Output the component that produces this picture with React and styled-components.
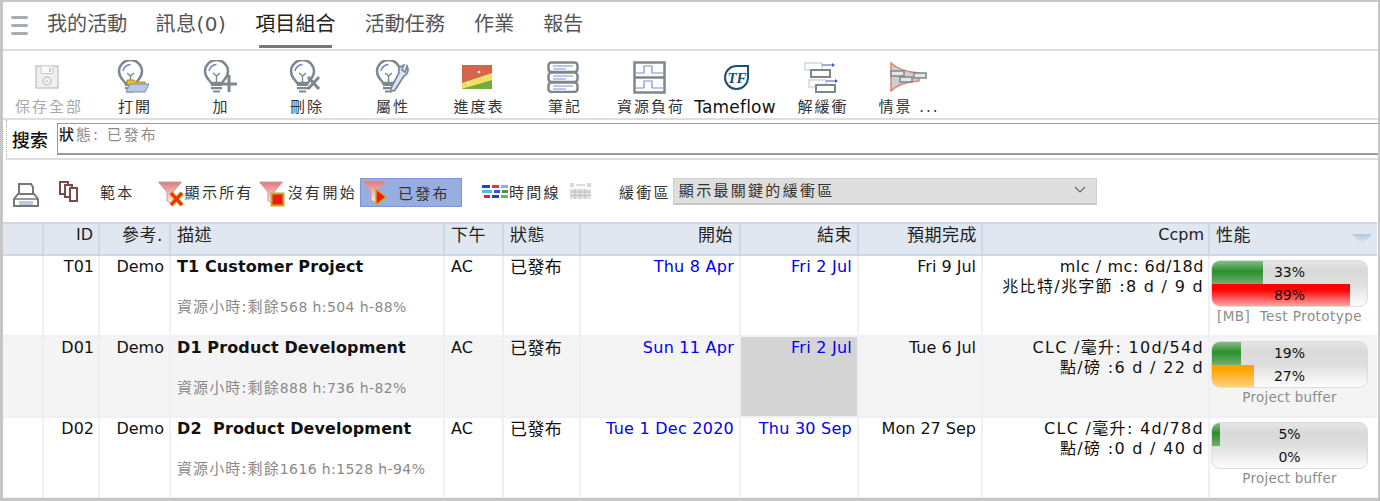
import React from "react";
import styled, { createGlobalStyle } from "styled-components";

const fontStack = `"DejaVu Sans", "Noto Sans CJK TC", sans-serif`;

const GlobalStyle = createGlobalStyle`
  html, body {
    margin: 0;
    padding: 0;
    background: #fff;
  }
`;

const Page = styled.div`
  box-sizing: border-box;
  width: 1380px;
  height: 501px;
  overflow: hidden;
  border: solid #c6c6c6;
  border-width: 2px 2px 3px 3px;
  font-family: ${fontStack};
  color: #111;
  background: #fff;
`;

const Nav = styled.nav`
  display: flex;
  align-items: stretch;
  height: 47px;
  padding-left: 8px;
  border-bottom: 2px solid #dedede;
`;

const Burger = styled.div`
  display: flex;
  flex-direction: column;
  gap: 5px;
  width: 17px;
  margin: 14px 19px 0 0;

  span {
    height: 3px;
    border-radius: 2px;
    background: #a9aeb3;
  }
`;

const NavItem = styled.div`
  position: relative;
  margin-right: ${p => (p.$tight ? 28 : 29)}px;
  padding-top: 7px;
  font-size: 20px;
  line-height: 30px;
  letter-spacing: ${p => (p.$wide ? "0.5px" : "0.1px")};
  color: ${p => (p.$active ? "#222" : "#555")};

  &::after {
    content: "";
    display: ${p => (p.$active ? "block" : "none")};
    position: absolute;
    left: 4px;
    right: 4px;
    bottom: 1px;
    height: 3px;
    background: #777;
  }
`;

const Toolbar = styled.div`
  display: flex;
  height: 67px;
  padding-left: 3px;
  border-bottom: 2px solid #dedede;
`;

const ToolButton = styled.div`
  display: flex;
  flex-direction: column;
  align-items: center;
  width: 86px;
  flex: none;
  color: ${p => (p.$disabled ? "#a8a8a8" : "#333")};
`;

const ToolIcon = styled.div`
  box-sizing: border-box;
  display: flex;
  align-items: center;
  justify-content: center;
  height: 45px;
  padding-top: 7px;
  margin-right: ${p => (p.$nudge ? 4 : 0)}px;
`;

const ToolLabel = styled.div`
  font-size: ${p => (p.$latin ? "17px" : "15px")};
  line-height: 22px;
  letter-spacing: ${p => (p.$latin ? "0.2px" : "2px")};
  margin-right: ${p => (p.$latin ? 4 : 0)}px;
  white-space: nowrap;
  color: ${p => (p.$latin ? "#111" : "inherit")};
`;

const SearchRow = styled.div`
  display: flex;
  align-items: center;
  height: 38px;
  margin-left: 3px;
  border-left: 1px dotted #aaa;
  border-bottom: 2px solid #dedede;
`;

const SearchLabel = styled.div`
  width: 45px;
  padding-left: 5px;
  font-size: 18px;
  font-weight: 500;
  color: #111;
`;

const SearchBox = styled.div`
  flex: 1;
  box-sizing: border-box;
  height: 32px;
  padding: 0 0 0 1px;
  border: solid #9a9a9a;
  border-width: 1px 0 2px 1px;
  font-size: 15px;
  line-height: 22px;
  letter-spacing: 2px;
  color: #8b8b8b;

  b {
    font-weight: 500;
    color: #222;
  }
`;

const FilterBar = styled.div`
  display: flex;
  align-items: center;
  height: 62px;
  padding-left: 10px;
  color: #333;
  font-size: 15px;
  letter-spacing: 2.3px;
  white-space: nowrap;
`;

const BarIcon = styled.div`
  display: flex;
  flex: none;
  margin-left: ${p => p.$gap || 0}px;
  margin-top: ${p => p.$drop || 0}px;
`;

const BarText = styled.span`
  margin-left: ${p => p.$gap || 0}px;
`;

const FilterToggle = styled.div`
  display: flex;
  align-items: center;
  box-sizing: border-box;
  width: 102px;
  height: 29px;
  margin: 3px 0 0 3px;
  padding-left: 1px;
  background: #98aee0;
  border: 1px solid #7b97d8;
`;

const BufferSelect = styled.div`
  display: flex;
  align-items: center;
  justify-content: space-between;
  box-sizing: border-box;
  width: 424px;
  height: 27px;
  margin-left: 2px;
  padding: 0 10px 2px 5px;
  background: #dedede;
  border: 1px solid #cfcfcf;
  border-bottom: 2px solid #c6c6c6;
`;

const Table = styled.table`
  table-layout: fixed;
  border-collapse: collapse;
  width: 1374px;
  font-size: 16px;
  line-height: 20px;
`;

const Head = styled.th`
  box-sizing: border-box;
  height: 32px;
  padding: 0 ${p => p.$padRight || 6}px 8px 6px;
  background: #e0e7f0;
  border: 2px solid #cbd8e8;
  font-size: ${p => (p.$cjk ? "17px" : "16px")};
  font-weight: 400;
  text-align: ${p => p.$align || "left"};
  letter-spacing: ${p => (p.$cjk ? "0.5px" : "0")};
  position: relative;
  color: #222;

  &:first-child {
    border-left: none;
  }
  &:last-child {
    border-right: none;
  }
`;

const SortMark = styled.i`
  position: absolute;
  right: 5px;
  top: 10px;
  width: 20px;
  height: 11px;
  clip-path: polygon(0 0, 100% 0, 50% 100%);
  background: linear-gradient(#b5c6dc, #e8edf5);
`;

const Row = styled.tr`
  background: ${p => (p.$alt ? "#f4f4f5" : "#fff")};
`;

const Cell = styled.td`
  box-sizing: border-box;
  height: 81px;
  padding: 1px ${p => p.$padRight || 6}px 0 6px;
  vertical-align: top;
  border: 2px solid #eef0f6;
  text-align: ${p => p.$align || "left"};
  color: ${p => (p.$blue ? "#0000ee" : "#111")};
  letter-spacing: ${p => (p.$blue ? "0.25px" : "0")};
  background: ${p => (p.$late ? "#d4d4d4" : "transparent")};
  white-space: nowrap;

  &:first-child {
    border-left: none;
  }
  &:last-child {
    border-right: none;
    padding: 4px 0 0 1px;
  }
`;

const Status = styled.span`
  font-size: 17px;
  letter-spacing: 0.4px;
`;

const Title = styled.div`
  font-weight: 700;
  letter-spacing: 0.12px;
  white-space: pre;
`;

const Hours = styled.div`
  margin-top: 20px;
  font-size: 14px;
  color: #8a8a8a;
  letter-spacing: 0.4px;

  span {
    font-size: 15px;
    letter-spacing: 1.1px;
  }
`;

const CcpmLine = styled.div`
  letter-spacing: ${p => (p.$latin ? "0.55px" : "1.3px")};
`;

const Gauge = styled.div`
  box-sizing: border-box;
  display: flex;
  flex-direction: column;
  width: 157px;
  height: 47px;
  overflow: hidden;
  border: 1px solid #dcdcdc;
  border-radius: 9px;
  background: linear-gradient(#e6e6e6 0, #d9d9d9 22%, #dedede 50%, #fdfdfd 100%);
`;

const GaugeRow = styled.div`
  display: grid;
  flex: 1;
`;

const GaugeFill = styled.div`
  grid-area: 1 / 1;
  height: 100%;
  background: ${p =>
    p.$tone === "red"
      ? "linear-gradient(#ff0000 25%, #ffb0b0)"
      : p.$tone === "orange"
      ? "linear-gradient(#ffa500 20%, #ffd488)"
      : "linear-gradient(#85bd85, #2b8f2b 45%, #6fb06f)"};
`;

const GaugeText = styled.div`
  grid-area: 1 / 1;
  z-index: 1;
  font-size: 14px;
  line-height: 23px;
  text-align: center;
  color: #111;
`;

const GaugeCaption = styled.div`
  width: 157px;
  font-size: 13.5px;
  line-height: 19px;
  text-align: center;
  color: #8c8c8c;
  letter-spacing: ${p => (p.$long ? "0.45px" : "0.25px")};
  white-space: pre;
`;

const Bulb = ({ children }) => (
  <svg width="36" height="34" viewBox="0 0 36 34">
    <path d="M8 23c-1-3-6-5-6-11.500a11.500 11.500 0 0 1 23 0c0 6.500-5 8.500-6 11.500z" fill="#fff" stroke="#7f888e" strokeWidth="2.500" />
    <path d="M6 11a7.500 7.500 0 0 1 7.500-6.500" fill="none" stroke="#6f84c9" strokeWidth="1.500" />
    <path d="M10 13l3.500 3 3.500-3M13.500 16v7" fill="none" stroke="#7f888e" strokeWidth="1.400" />
    <path d="M8 25h11M8 28.200h11M10 31.500h7" stroke="#7f888e" strokeWidth="2.200" />
    {children}
  </svg>
);

const icons = {
  save: (
    <svg width="24" height="24" viewBox="0 0 24 24">
      <path d="M1 1h22v22H1z" fill="#f0f0f0" stroke="#c9c9c9" strokeWidth="1.500" />
      <path d="M6 1.500v7h12v-7" fill="#fafafa" stroke="#c9c9c9" />
      <path d="M14 3h2v4h-2z" fill="#c9c9c9" />
      <circle cx="12" cy="16" r="4" fill="none" stroke="#c9c9c9" strokeWidth="1.500" />
      <circle cx="12" cy="16" r="1" fill="#c9c9c9" />
    </svg>
  ),
  open: (
    <Bulb>
      <path d="M10 20h7l2 2h9v3H10z" fill="#f0bd2e" stroke="#a98a2b" />
      <path d="M9 32l4-8h19l-4 8z" fill="#b9c8e6" stroke="#7e8fa8" />
    </Bulb>
  ),
  add: (
    <Bulb>
      <path d="M26 15v17M17 24h17" stroke="#7f888e" strokeWidth="3" />
    </Bulb>
  ),
  remove: (
    <Bulb>
      <path d="M19 17l11 12M30 17L19 29" stroke="#7f888e" strokeWidth="3" />
    </Bulb>
  ),
  props: (
    <Bulb>
      <path d="M32 6c2 4 1 8-3 10l-9 14c-1 2-5 0-4-2l8-15c-1-4 1-7 5-8l-2 5 3 2z" fill="#dfe5f2" stroke="#7d8aa5" strokeWidth="1.800" />
    </Bulb>
  ),
  gantt: (
    <svg width="32" height="26" viewBox="0 0 32 26">
      <path d="M1 1h30v24H1z" fill="#d2654a" />
      <path d="M1 19L31 9v8L1 25z" fill="#f4dd63" />
      <path d="M1 25l30-9v9z" fill="#6fae3d" />
      <circle cx="18" cy="8" r="1.300" fill="#fff" />
      <circle cx="7" cy="19" r="1.300" fill="#fff" />
    </svg>
  ),
  notes: (
    <svg width="32" height="32" viewBox="0 0 32 32">
      {[1, 11, 21].map(y => (
        <g key={y}>
          <rect x="1.500" y={y + 0.5} width="29" height="9.500" rx="3" fill="#fff" stroke="#7f868c" strokeWidth="2.500" />
          <path d={`M6 ${y + 4}h20M6 ${y + 7}h13`} stroke="#7c90cf" strokeWidth="1.200" />
        </g>
      ))}
    </svg>
  ),
  load: (
    <svg width="33" height="33" viewBox="0 0 33 33">
      <path d="M1.500 1.500h30v30h-30zM1.500 16.500h30" fill="#fff" stroke="#7f868c" strokeWidth="2.500" />
      <path d="M3 12h8V5h8v7h11M3 27h8v-7h8v7h11" fill="none" stroke="#7c90cf" strokeWidth="1.200" />
    </svg>
  ),
  tameflow: (
    <svg width="28" height="27" viewBox="0 0 28 27">
      <path d="M25 2v12a11.500 11.500 0 1 1-11-12z" fill="#fff" stroke="#1c4f77" strokeWidth="2" />
      <text x="14" y="19" textAnchor="middle" fontSize="15" fontWeight="700" fontStyle="italic" fill="#1c4f77" fontFamily="Liberation Serif, serif">TF</text>
    </svg>
  ),
  unbuffer: (
    <svg width="34" height="32" viewBox="0 0 34 32">
      <rect x="1" y="2" width="17" height="7" fill="#fff" stroke="#d5d5d5" strokeWidth="1.500" />
      <rect x="7" y="9" width="19" height="7" fill="#fff" stroke="#7f868c" strokeWidth="2" />
      <path d="M18 4h11" stroke="#3f5fb0" />
      <path d="M28 2l3 2-3 2z" fill="#3f5fb0" />
      <rect x="5" y="19" width="17" height="7" fill="#fff" stroke="#d5d5d5" strokeWidth="1.500" />
      <rect x="12" y="24" width="19" height="7" fill="#fff" stroke="#7f868c" strokeWidth="2" />
      <path d="M22 20h11" stroke="#3f5fb0" />
      <path d="M31 18l3 2-3 2z" fill="#3f5fb0" />
    </svg>
  ),
  scenario: (
    <svg width="38" height="30" viewBox="0 0 38 30">
      <path d="M1 1c6 6 14 9 28 10v8C15 20 7 23 1 29z" fill="#cfcfcf" stroke="#d98672" strokeWidth="1.500" />
      <rect x="1" y="9" width="13" height="5" fill="#e6e6e6" stroke="#7f868c" strokeWidth="1.500" />
      <rect x="10" y="15" width="12" height="5" fill="#e6e6e6" stroke="#7f868c" strokeWidth="1.500" />
      <rect x="24" y="11" width="12" height="5" fill="#e6e6e6" stroke="#7f868c" strokeWidth="1.500" />
    </svg>
  ),
  printer: (
    <svg width="26" height="25" viewBox="0 0 26 25">
      <path d="M6 13V2h12l2 3v8" fill="#fff" stroke="#777" strokeWidth="2" />
      <path d="M5 12h16l4 5v7H1v-7z" fill="#fff" stroke="#777" strokeWidth="2" />
      <path d="M1 17h24" stroke="#777" strokeWidth="1.500" />
      <path d="M6 20h14M6 22h14" stroke="#7c90cf" />
    </svg>
  ),
  copy: (
    <svg width="21" height="22" viewBox="0 0 21 22">
      <path d="M2 2h8v12H2z" fill="#fff" stroke="#7a4a44" strokeWidth="2" />
      <path d="M7 5h7v12H7z" fill="#fff" stroke="#7a4a44" strokeWidth="2" />
      <path d="M12 8h7v13h-7z" fill="#fff" stroke="#7a4a44" strokeWidth="2" />
    </svg>
  ),
  timeline: (
    <svg width="27" height="15" viewBox="0 0 27 15">
      <path d="M1 1h8v3H1z" fill="#2b3fc0" />
      <path d="M11 1h7v3h-7z" fill="#e33b3b" />
      <path d="M20 1h7v3h-7z" fill="#9aa7e0" />
      <path d="M1 6h10v3H1z" fill="#57b7e8" />
      <path d="M13 6h6v3h-6z" fill="#3b55c8" />
      <path d="M21 6h6v3h-6z" fill="#3c9b4a" />
      <path d="M3 11h6v3H3z" fill="#ee2222" />
      <path d="M11 11h7v3h-7z" fill="#2b3fc0" />
      <path d="M20 11h7v3h-7z" fill="#63b85a" />
    </svg>
  ),
  calendar: (
    <svg width="23" height="18" viewBox="0 0 23 18">
      <path d="M1 1h4v4H1zM18 1h4v4h-4z" fill="#d8d8d8" />
      <path d="M7 3h9" stroke="#d0d0d0" strokeWidth="1.500" />
      <path d="M1 7h21v10H1z" fill="#e2e2e2" />
      <path d="M1 10h21M1 13.500h21M6 7v10M11 7v10M16 7v10" stroke="#bfbfbf" />
    </svg>
  )
};

const Funnel = ({ mark }) => (
  <svg width="26" height="27" viewBox="0 0 26 27">
    <defs>
      <linearGradient id={`funnel-${mark}`} x1="0" x2="0" y1="0" y2="1">
        <stop offset="0" stopColor="#dd7a7a" />
        <stop offset="0.5" stopColor="#f2b5b5" />
        <stop offset="1" stopColor="#fff1f1" />
      </linearGradient>
    </defs>
    <path d="M0.500 2h23l-8.500 10v12l-6-3v-9z" fill={`url(#funnel-${mark})`} stroke="#cf9a9a" />
    {mark === "all" && <path d="M13 13l11 12M24 13L13 25" stroke="#d8c24a" strokeWidth="5" />}
    {mark === "all" && <path d="M13 13l11 12M24 13L13 25" stroke="#e8300c" strokeWidth="3" />}
    {mark === "idle" && <path d="M12.500 13.500h12v12h-12z" fill="#ee1c0c" stroke="#c9a72e" strokeWidth="2" />}
    {mark === "run" && <path d="M14 10l10 8-10 8z" fill="#ee1c0c" stroke="#c9a72e" strokeWidth="1.500" />}
  </svg>
);

const tools = [
  { icon: "save", label: "保存全部", disabled: true, nudge: true },
  { icon: "open", label: "打開" },
  { icon: "add", label: "加" },
  { icon: "remove", label: "刪除" },
  { icon: "props", label: "屬性" },
  { icon: "gantt", label: "進度表", nudge: true },
  { icon: "notes", label: "筆記", nudge: true },
  { icon: "load", label: "資源負荷", nudge: true },
  { icon: "tameflow", label: "Tameflow", latin: true },
  { icon: "unbuffer", label: "解緩衝", nudge: true },
  { icon: "scenario", label: "情景 ..." }
];

const columns = [
  { width: 40, label: "" },
  { width: 56, label: "ID", align: "right", padRight: 5 },
  { width: 71, label: "參考.", align: "right", cjk: true },
  { width: 274, label: "描述", cjk: true },
  { width: 59, label: "下午", cjk: true },
  { width: 77, label: "狀態", cjk: true },
  { width: 160, label: "開始", align: "right", cjk: true },
  { width: 118, label: "結束", align: "right", cjk: true, padRight: 5 },
  { width: 124, label: "預期完成", align: "right", cjk: true, padRight: 4 },
  { width: 227, label: "Ccpm", align: "right", padRight: 4 },
  { width: 168, label: "性能", cjk: true, sort: true }
];

const rows = [
  {
    id: "T01",
    title: "T1 Customer Project",
    hoursLabel: "資源小時:剩餘",
    hours: "568 h:504 h-88%",
    start: "Thu 8 Apr",
    end: "Fri 2 Jul",
    due: "Fri 9 Jul",
    ccpm: ["mlc / mc: 6d/18d", "兆比特/兆字節 :8 d / 9 d"],
    latinCcpm: true,
    top: 33,
    bottom: 89,
    tone: "red",
    caption: "[MB]  Test Prototype",
    longCaption: true
  },
  {
    id: "D01",
    title: "D1 Product Development",
    hoursLabel: "資源小時:剩餘",
    hours: "888 h:736 h-82%",
    start: "Sun 11 Apr",
    end: "Fri 2 Jul",
    due: "Tue 6 Jul",
    ccpm: ["CLC /毫升: 10d/54d", "點/磅 :6 d / 22 d"],
    top: 19,
    bottom: 27,
    tone: "orange",
    caption: "Project buffer",
    alt: true,
    late: true
  },
  {
    id: "D02",
    title: "D2  Product Development",
    hoursLabel: "資源小時:剩餘",
    hours: "1616 h:1528 h-94%",
    start: "Tue 1 Dec 2020",
    end: "Thu 30 Sep",
    due: "Mon 27 Sep",
    ccpm: ["CLC /毫升: 4d/78d", "點/磅 :0 d / 40 d"],
    top: 5,
    bottom: 0,
    tone: "orange",
    caption: "Project buffer"
  }
];

const App = () => (
  <Page>
    <GlobalStyle />
    <Nav>
      <Burger>
        <span />
        <span />
        <span />
      </Burger>
      <NavItem $tight>我的活動</NavItem>
      <NavItem $wide>訊息(0)</NavItem>
      <NavItem $active>項目組合</NavItem>
      <NavItem>活動任務</NavItem>
      <NavItem>作業</NavItem>
      <NavItem>報告</NavItem>
    </Nav>
    <Toolbar>
      {tools.map(t => (
        <ToolButton key={t.icon} $disabled={t.disabled}>
          <ToolIcon $nudge={t.nudge}>{icons[t.icon]}</ToolIcon>
          <ToolLabel $latin={t.latin}>{t.label}</ToolLabel>
        </ToolButton>
      ))}
    </Toolbar>
    <SearchRow>
      <SearchLabel>搜索</SearchLabel>
      <SearchBox>
        <b>狀</b>態: 已發布
      </SearchBox>
    </SearchRow>
    <FilterBar>
      <BarIcon $drop={6}>{icons.printer}</BarIcon>
      <BarIcon $gap={19}>{icons.copy}</BarIcon>
      <BarText $gap={21}>範本</BarText>
      <BarIcon $gap={23} $drop={4}>
        <Funnel mark="all" />
      </BarIcon>
      <BarText $gap={1}>顯示所有</BarText>
      <BarIcon $gap={5} $drop={4}>
        <Funnel mark="idle" />
      </BarIcon>
      <BarText $gap={3}>沒有開始</BarText>
      <FilterToggle>
        <Funnel mark="run" />
        <BarText $gap={10}>已發布</BarText>
      </FilterToggle>
      <BarIcon $gap={19}>{icons.timeline}</BarIcon>
      <BarText $gap={1}>時間線</BarText>
      <BarIcon $gap={8}>{icons.calendar}</BarIcon>
      <BarText $gap={27}>緩衝區</BarText>
      <BufferSelect>
        顯示最關鍵的緩衝區
        <svg width="12" height="8" viewBox="0 0 12 8">
          <path d="M1 1l5 5 5-5" fill="none" stroke="#666" strokeWidth="1.200" />
        </svg>
      </BufferSelect>
    </FilterBar>
    <Table>
      <colgroup>
        {columns.map((c, i) => (
          <col key={i} width={c.width} />
        ))}
      </colgroup>
      <thead>
        <tr>
          {columns.map((c, i) => (
            <Head key={i} $align={c.align} $cjk={c.cjk} $padRight={c.padRight}>
              {c.label}
              {c.sort && <SortMark />}
            </Head>
          ))}
        </tr>
      </thead>
      <tbody>
        {rows.map(r => (
          <Row key={r.id} $alt={r.alt}>
            <Cell />
            <Cell $align="right" $padRight={4}>{r.id}</Cell>
            <Cell $align="right" $padRight={5}>Demo</Cell>
            <Cell>
              <Title>{r.title}</Title>
              <Hours>
                <span>{r.hoursLabel}</span>
                {r.hours}
              </Hours>
            </Cell>
            <Cell>AC</Cell>
            <Cell>
              <Status>已發布</Status>
            </Cell>
            <Cell $align="right" $blue $padRight={5}>{r.start}</Cell>
            <Cell $align="right" $blue $late={r.late} $padRight={5}>{r.end}</Cell>
            <Cell $align="right" $padRight={5}>{r.due}</Cell>
            <Cell $align="right" $padRight={4}>
              <CcpmLine $latin={r.latinCcpm}>{r.ccpm[0]}</CcpmLine>
              <CcpmLine>{r.ccpm[1]}</CcpmLine>
            </Cell>
            <Cell>
              <Gauge>
                <GaugeRow>
                  <GaugeFill $tone="green" style={{ width: `${r.top}%` }} />
                  <GaugeText>{r.top}%</GaugeText>
                </GaugeRow>
                <GaugeRow>
                  <GaugeFill $tone={r.tone} style={{ width: `${r.bottom}%` }} />
                  <GaugeText>{r.bottom}%</GaugeText>
                </GaugeRow>
              </Gauge>
              <GaugeCaption $long={r.longCaption}>{r.caption}</GaugeCaption>
            </Cell>
          </Row>
        ))}
      </tbody>
    </Table>
  </Page>
);

export default App;
